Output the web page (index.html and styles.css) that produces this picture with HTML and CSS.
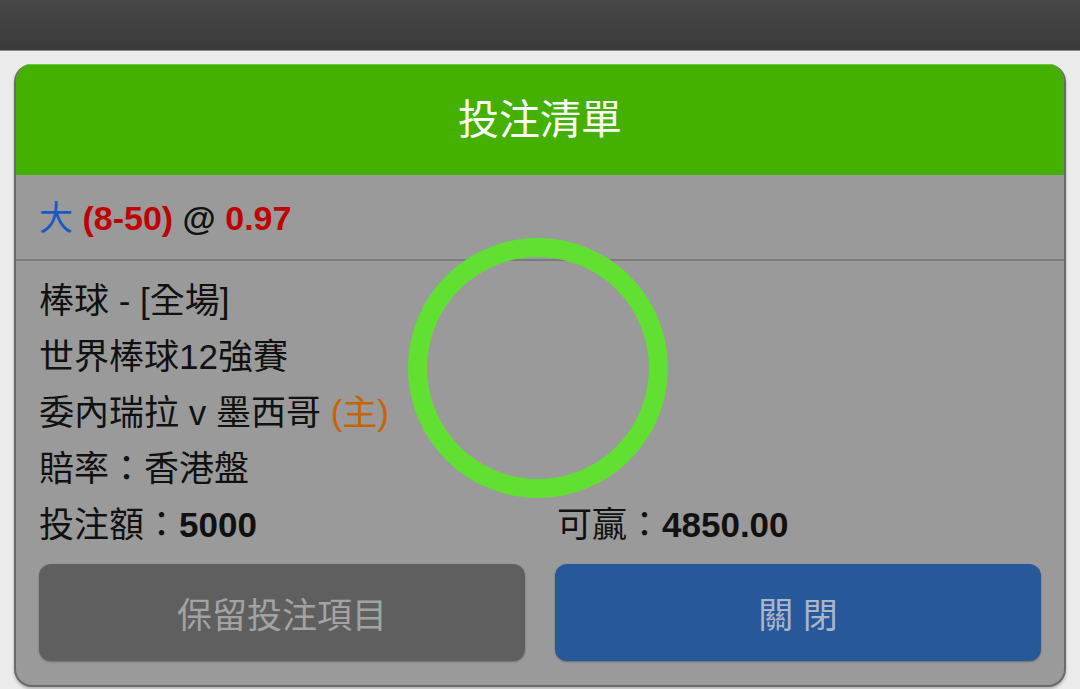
FILE: index.html
```html
<!DOCTYPE html>
<html lang="zh-Hant">
<head>
    <meta charset="UTF-8">
    <meta name="viewport" content="width=device-width, initial-scale=1.0">
    <title>投注清單</title>
    <link rel="stylesheet" href="styles.css">
</head>
<body>
    <div class="topbar"></div>
    <div class="page">
        <div class="card">
            <div class="card-header">投注清單</div>
            <div class="selection">
                <span class="pick">大</span>
                <span class="red">(8-50)</span>
                <span class="at">@</span>
                <span class="red">0.97</span>
            </div>
            <div class="details">
                <div class="line">棒球 - [全場]</div>
                <div class="line">世界棒球12強賽</div>
                <div class="line">委內瑞拉 v 墨西哥 <span class="home">(主)</span></div>
                <div class="line">賠率：香港盤</div>
                <div class="pair">
                    <div class="line">投注額：<b>5000</b></div>
                    <div class="line">可贏：<b>4850.00</b></div>
                </div>
                <div class="pair buttons">
                    <button type="button" class="btn btn-keep">保留投注項目</button>
                    <button type="button" class="btn btn-close">關 閉</button>
                </div>
            </div>
            <div class="spinner"></div>
        </div>
    </div>
</body>
</html>
```

FILE: styles.css
```css
body {
    margin: 0;
    padding: 0;
    background-color: #ebebeb;
    font-family: "Liberation Sans", "Noto Sans CJK TC", sans-serif;
    color: #111111;
    height: 689px;
    overflow: hidden;
}

.topbar {
    height: 50px;
    background: linear-gradient(#474747, #3a3a3a);
    border-bottom: 1px solid #8a8a8a;
}

.page {
    padding: 13px 14px 0;
}

.card {
    position: relative;
    background-color: #9a9a9a;
    border: 2px solid #6a6a6a;
    border-top: none;
    border-radius: 18px;
    overflow: hidden;
    box-shadow: 0 2px 3px rgba(0, 0, 0, 0.25);
}

.card-header {
    background-color: #44b000;
    color: #ffffff;
    height: 111px;
    line-height: 110px;
    text-align: center;
    font-size: 41px;
    border-top: 1px solid #6ccc3a;
    box-sizing: border-box;
    margin: 0 -2px;
}

.selection {
    height: 84px;
    line-height: 86px;
    padding: 0 23px;
    font-size: 34px;
    font-weight: bold;
    border-bottom: 2px solid #7c7c7c;
}

.pick {
    color: #1b58c4;
    font-weight: normal;
}

.red {
    color: #c00000;
}

.at {
    color: #111111;
}

.details {
    padding: 12px 23px 24px;
}

.line {
    height: 56px;
    line-height: 56px;
    font-size: 35px;
    white-space: nowrap;
}

.home {
    color: #c86400;
}

.pair {
    display: grid;
    grid-template-columns: 1fr 1fr;
    column-gap: 30px;
}

.pair .line:last-child {
    padding-left: 2px;
}

.buttons {
    margin-top: 11px;
}

.btn {
    height: 97px;
    border: none;
    border-radius: 12px;
    font-family: "Liberation Sans", "Noto Sans CJK TC", sans-serif;
    font-size: 35px;
    box-shadow: 0 1px 2px rgba(0, 0, 0, 0.3);
}

.btn-keep {
    background-color: #5f5f5f;
    color: #a3a3a3;
}

.btn-close {
    background-color: #27589a;
    color: #aab6c8;
}

.spinner {
    position: absolute;
    left: 392px;
    top: 174px;
    width: 260px;
    height: 260px;
    box-sizing: border-box;
    border: 19px solid #62e032;
    border-radius: 50%;
}
```
